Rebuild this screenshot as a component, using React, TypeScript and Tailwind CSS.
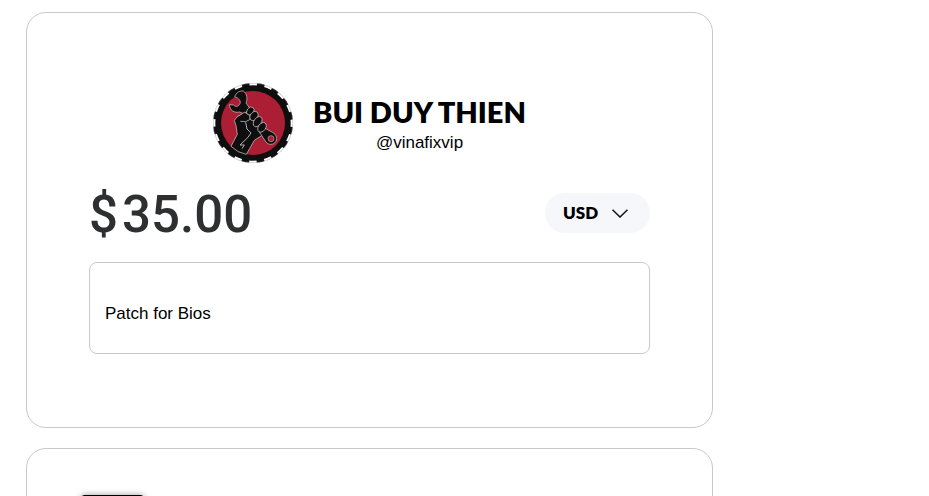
import { useState } from "react";

const currencies = ["USD", "EUR", "VND"];

function GearBadge() {
  return (
    <svg viewBox="30 30 240 240" className="size-20 shrink-0" role="img" aria-label="Profile picture">
      <circle cx="150" cy="150" r="120" fill="#0e0e0e" />
      {/* notches between the teeth */}
      <circle
        cx="150"
        cy="150"
        r="117"
        fill="none"
        stroke="#fff"
        strokeWidth="8"
        pathLength="160"
        strokeDasharray="5 5"
        strokeDashoffset="2.5"
      />
      <circle cx="150" cy="150" r="119" fill="none" stroke="#888" strokeWidth="1" />
      <circle cx="150" cy="150" r="96" fill="#ab1e33" />
      <g fill="#0e0e0e" stroke="#b9aeb0" strokeWidth="2.5" strokeLinejoin="round">
        {/* forearm */}
        <path d="M104 130 L94 142 L99 158 L103 184 L84 220 Q104 240 130 244 L154 202 L176 188 L180 168 L150 112 L126 120 Z" />
        {/* wrench */}
        <path d="M176 160 L208 178 C222 184 224 200 216 209 C206 218 192 214 187 204 L168 176 Z" />
        <path d="M95 71 C100 58 110 53 121 54 C133 62 134 78 129 90 L142 108 L122 122 L110 117 C94 121 80 112 79 95 L92 96 C98 103 107 100 111 92 C114 83 108 76 95 71 Z" />
        {/* fingers */}
        <path d="M99 134 L124 118 L137 124 Q146 132 140 140 L128 146 L112 145" />
        <ellipse cx="142" cy="114" rx="10" ry="13" transform="rotate(35 142 114)" />
        <ellipse cx="153" cy="129" rx="11" ry="15" transform="rotate(35 153 129)" />
        <ellipse cx="164" cy="146" rx="11" ry="17" transform="rotate(35 164 146)" />
        <ellipse cx="177" cy="163" rx="11" ry="16" transform="rotate(35 177 163)" />
      </g>
      <path
        d="M128 148 L132 168 L144 180 L134 194 L111 216 L124 216 L117 227"
        fill="none"
        stroke="#d5d0d0"
        strokeWidth="2.5"
      />
      <circle cx="204" cy="197" r="9" fill="#ab1e33" stroke="#b9aeb0" strokeWidth="2" />
    </svg>
  );
}

function CurrencySelect() {
  const [currency, setCurrency] = useState("USD");
  return (
    <div className="relative">
      <select
        aria-label="Currency"
        value={currency}
        onChange={(e) => setCurrency(e.target.value)}
        className="h-10 w-[105px] appearance-none rounded-full bg-[#f5f7fb] pl-[18px] font-['Lato',sans-serif] text-[17px] font-extrabold text-black"
      >
        {currencies.map((c) => (
          <option key={c}>{c}</option>
        ))}
      </select>
      <svg viewBox="0 0 16 9" className="pointer-events-none absolute top-4 right-[22px] h-[9px] w-4" fill="none" stroke="#111" strokeWidth="1.5">
        <path d="M.5 .7 8 8l7.5-7.3" />
      </svg>
    </div>
  );
}

export default function App() {
  return (
    <main className="flex h-screen flex-col gap-5 overflow-hidden bg-white px-[26px] pt-3 font-['Liberation_Sans',Arial,sans-serif] text-black">
      <section className="w-full max-w-[687px] shrink-0 rounded-[20px] border border-[#c9c9c9] px-[62px] pt-[70px] pb-[73px]">
        <header className="flex items-center justify-center gap-5">
          <GearBadge />
          <div className="pt-1 text-center">
            <h1 className="font-['Lato',sans-serif] text-[29px] leading-9 font-extrabold">BUI DUY THIEN</h1>
            <p className="text-[17px] leading-[26px]">@vinafixvip</p>
          </div>
        </header>

        <div className="mt-5 flex items-center justify-between">
          <p className="flex gap-1 pt-1 font-['Roboto',sans-serif] text-[51px] leading-[56px] font-medium text-[#2d2f31]">
            <span>$</span>
            <span>35.00</span>
          </p>
          <CurrencySelect />
        </div>

        <div className="mt-[19px] rounded-lg border border-[#c9c9c9] px-[15px] pt-[39px] pb-[27px]">
          <p className="text-[17px] leading-6">Patch for Bios</p>
        </div>
      </section>

      <section className="w-full max-w-[687px] shrink-0 rounded-[20px] border border-[#c9c9c9] px-[54px] pt-[46px] pb-10">
        <div className="h-10 w-[63px] rounded bg-black shadow-[0_0_6px_rgba(0,0,0,0.4)]" />
      </section>
    </main>
  );
}
